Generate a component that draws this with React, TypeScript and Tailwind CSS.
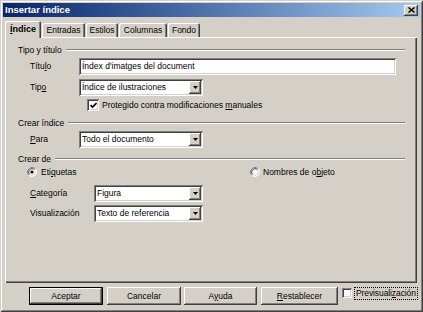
import React from 'react';

const raised =
  'shadow-[inset_-1px_-1px_#404040,inset_1px_1px_#ffffff,inset_-2px_-2px_#808080,inset_2px_2px_#d4d0c8]';
const sunken =
  'shadow-[inset_1px_1px_#808080,inset_-1px_-1px_#ffffff,inset_2px_2px_#404040,inset_-2px_-2px_#d4d0c8]';

const Arrow = () => (
  <svg width="5" height="3" viewBox="0 0 5 3">
    <path d="M0 0h5L2.5 3z" fill="#000" />
  </svg>
);

const Select = ({ value, w }: { value: string; w: string }) => (
  <div className={`${w} h-[17px] bg-white ${sunken} flex items-center p-[2px]`}>
    <span className="flex-1 pl-[1px] leading-none">{value}</span>
    <div className={`w-[12px] h-full bg-[#d4d0c8] ${raised} flex items-center justify-center`}>
      <Arrow />
    </div>
  </div>
);

const Group = ({ title, className }: { title: string; className: string }) => (
  <div className={`flex items-center h-[12px] ${className}`}>
    <span className="leading-none">{title}</span>
    <div className="flex-1 ml-[4px] h-[2px] border-t border-t-[#808080] border-b border-b-white" />
  </div>
);

const Check = ({ size }: { size: string }) => (
  <div className={`${size} bg-white ${sunken} flex items-center justify-center`}>
    <svg width="7" height="7" viewBox="0 0 7 7">
      <path d="M0.5 3 L2.5 5 L6.5 1" stroke="#000" strokeWidth="1.6" fill="none" />
    </svg>
  </div>
);

const Radio = ({ on }: { on?: boolean }) => (
  <svg width="10" height="10" viewBox="0 0 10 10">
    <circle cx="5" cy="5" r="4.5" fill="#fff" />
    <path d="M1.82 8.18A4.5 4.5 0 0 1 8.18 1.82" stroke="#808080" fill="none" />
    <path d="M8.18 1.82A4.5 4.5 0 0 1 1.82 8.18" stroke="#ffffff" fill="none" />
    <path d="M2.53 7.47A3.5 3.5 0 0 1 7.47 2.53" stroke="#404040" fill="none" />
    <path d="M7.47 2.53A3.5 3.5 0 0 1 2.53 7.47" stroke="#d4d0c8" fill="none" />
    {on && <circle cx="5" cy="5" r="1.6" fill="#000" />}
  </svg>
);

const U = ({ children }: { children: React.ReactNode }) => <span className="underline">{children}</span>;

export default function App() {
  const tabs = [
    { label: 'Entradas', w: 'w-[43px]' },
    { label: 'Estilos', w: 'w-[32px]' },
    { label: 'Columnas', w: 'w-[48px]' },
    { label: 'Fondo', w: 'w-[32px]' },
  ];

  return (
    <div className="w-[423px] h-[312px] bg-[#d4d0c8] p-[3px] flex flex-col text-black text-[8.5px] font-['Liberation_Sans',Arial,sans-serif] shadow-[inset_1px_1px_#d4d0c8,inset_-1px_-1px_#404040,inset_2px_2px_#ffffff,inset_-2px_-2px_#808080]">
      {/* Title bar */}
      <div className="h-[14px] bg-gradient-to-r from-[#0a246a] to-[#a6caf0] flex items-center pl-[2px] pr-[2px]">
        <span className="flex-1 text-white font-bold text-[9.5px] leading-none">Insertar índice</span>
        <div className={`w-[14px] h-[11px] bg-[#d4d0c8] ${raised} flex items-center justify-center`}>
          <svg width="7" height="6" viewBox="0 0 7 6">
            <path d="M0.5 0.5L6.5 5.5M6.5 0.5L0.5 5.5" stroke="#000" strokeWidth="1.5" />
          </svg>
        </div>
      </div>

      {/* Tabs */}
      <div className="flex items-end gap-[1px] ml-[2px] mt-[4px] h-[16px]">
        <div className="relative z-10 -mb-[1px] w-[36px] h-[17px] bg-[#d4d0c8] rounded-t-[2px] shadow-[inset_1px_1px_#ffffff,inset_-1px_0_#404040,inset_-2px_0_#808080] flex items-center justify-center pb-[1px] font-bold text-[9px]">
          <span className="leading-none"><U>Í</U>ndice</span>
        </div>
        {tabs.map((t) => (
          <div
            key={t.label}
            className={`${t.w} h-[14px] rounded-t-[2px] shadow-[inset_1px_1px_#ffffff,inset_-1px_0_#404040,inset_-2px_0_#808080] flex items-center justify-center`}
          >
            <span className="leading-none">{t.label}</span>
          </div>
        ))}
      </div>

      {/* Panel */}
      <div className="ml-[2px] w-[412px] h-[246px] shadow-[inset_1px_1px_#ffffff,inset_-1px_-1px_#404040,inset_-2px_-2px_#808080] flex flex-col pl-[13px] pr-[12px]">
        <Group title="Tipo y título" className="mt-[7px]" />
        <div className="flex items-center mt-[2px] h-[17px]">
          <span className="ml-[12px] w-[49px] leading-none">Títu<U>l</U>o</span>
          <div className={`w-[317px] h-[17px] bg-white ${sunken} flex items-center px-[3px]`}>
            <span className="leading-none">Índex d'imatges del document</span>
          </div>
        </div>
        <div className="flex items-center mt-[4px] h-[17px]">
          <span className="ml-[12px] w-[49px] leading-none">Tip<U>o</U></span>
          <Select value="Índice de ilustraciones" w="w-[124px]" />
        </div>
        <div className="flex items-center mt-[3px] h-[12px] ml-[69px] gap-[3px]">
          <Check size="w-[12px] h-[12px]" />
          <span className="leading-none">Protegido contra modificaciones <U>m</U>anuales</span>
        </div>

        <Group title="Crear índice" className="mt-[6px]" />
        <div className="flex items-center mt-[2px] h-[17px]">
          <span className="ml-[12px] w-[49px] leading-none"><U>P</U>ara</span>
          <Select value="Todo el documento" w="w-[124px]" />
        </div>

        <Group title="Crear de" className="mt-[5px]" />
        <div className="flex items-center mt-[1px] h-[12px]">
          <div className="ml-[9px] w-[223px] flex items-center gap-[4px]">
            <Radio on />
            <span className="leading-none">Eti<U>q</U>uetas</span>
          </div>
          <div className="flex items-center gap-[3px]">
            <Radio />
            <span className="leading-none">Nombres de o<U>b</U>jeto</span>
          </div>
        </div>
        <div className="flex items-center mt-[7px] h-[17px]">
          <span className="ml-[12px] w-[64px] leading-none"><U>C</U>ategoría</span>
          <Select value="Figura" w="w-[109px]" />
        </div>
        <div className="flex items-center mt-[3px] h-[17px]">
          <span className="ml-[12px] w-[64px] leading-none">Visualización</span>
          <Select value="Texto de referencia" w="w-[109px]" />
        </div>
      </div>

      {/* Buttons */}
      <div className="flex items-center mt-[4px] h-[18px] pl-[26px]">
        <div className={`w-[74px] h-[18px] border border-black ${raised} flex items-center justify-center`}>
          <span className="leading-none">Aceptar</span>
        </div>
        <div className={`ml-[4px] w-[74px] h-[18px] ${raised} flex items-center justify-center`}>
          <span className="leading-none">Cancelar</span>
        </div>
        <div className={`ml-[3px] w-[73px] h-[18px] ${raised} flex items-center justify-center`}>
          <span className="leading-none">A<U>y</U>uda</span>
        </div>
        <div className={`ml-[4px] w-[77px] h-[18px] ${raised} flex items-center justify-center`}>
          <span className="leading-none"><U>R</U>establecer</span>
        </div>
        <div className="ml-[4px] flex items-center gap-[2px] self-start">
          <div className={`w-[10px] h-[10px] bg-white ${sunken}`} />
          <span className="leading-none border border-dotted border-black px-[1px] py-[1px] tracking-[-0.1px]">Previsuali<U>z</U>ación</span>
        </div>
      </div>
    </div>
  );
}
